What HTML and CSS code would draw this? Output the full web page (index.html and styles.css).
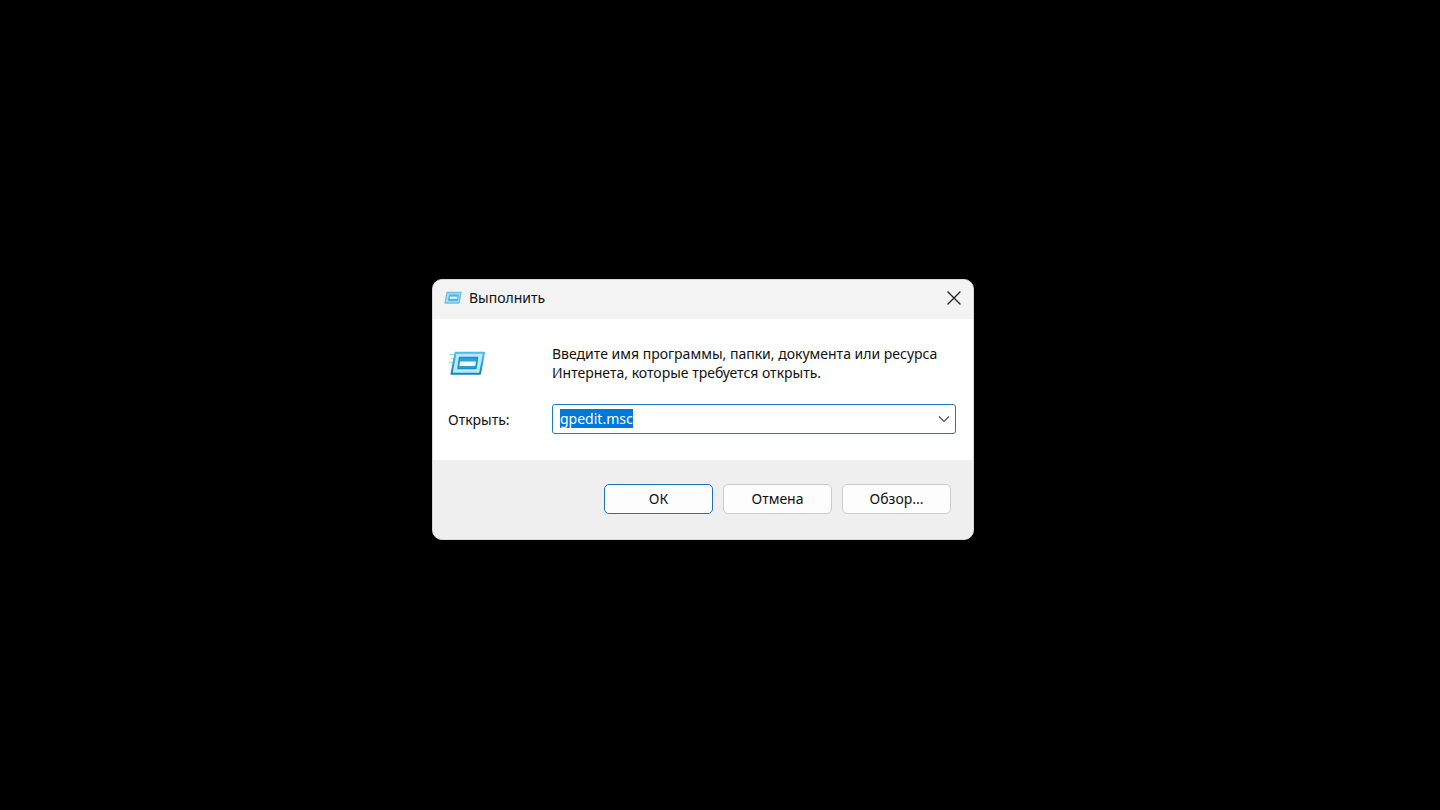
FILE: index.html
```html
<!DOCTYPE html>
<html lang="ru">
<head>
    <meta charset="UTF-8">
    <title>Выполнить</title>
    <link rel="stylesheet" href="styles.css">
</head>
<body>

    <form class="window" id="runDialog">
        <!-- Title bar -->
        <div class="title-bar">
            <svg class="title-icon" viewBox="0 0 18 14">
                <path d="M3 1.500h14l-2 10.500H1z" fill="#a5dcf5" stroke="#6cc0e8" stroke-width="1.300" stroke-linejoin="round"/>
                <path d="M5.500 4h9l-1 5.500H4.500z" fill="#4fb4e4" stroke="#4fb4e4" stroke-linejoin="round"/>
                <path d="M6 5.700h7.500l-.4 2H5.600z" fill="#f4fbff"/>
            </svg>
            <h1>Выполнить</h1>
            <button type="button" class="close-button" aria-label="Закрыть">
                <svg viewBox="0 0 14 14" width="14" height="14">
                    <path d="M1 1l12 12M13 1L1 13" stroke="#222" stroke-width="1.4" stroke-linecap="round"/>
                </svg>
            </button>
        </div>

        <!-- Message and command box -->
        <div class="content">
            <svg class="run-icon" viewBox="0 0 38 28">
                <defs>
                    <linearGradient id="frame" x1="0" y1="0" x2="0" y2="1">
                        <stop offset="0" stop-color="#4cbde9"/>
                        <stop offset="1" stop-color="#1385bd"/>
                    </linearGradient>
                </defs>
                <path d="M1 5.500h6M3 9.500h4M1 13.500h4" stroke="#a9dff5" stroke-width="1.500"/>
                <path d="M7.500 3.800h28.500L32 24.800H3.500z" fill="#b9e9fb" stroke="url(#frame)" stroke-width="2" stroke-linejoin="round"/>
                <path d="M11.500 8.500h18l-1.500 11H10z" fill="#2ba3d8" stroke="#1b91c9" stroke-width="1.500" stroke-linejoin="round"/>
                <path d="M12 12.500h16l-.8 4.500H11.400z" fill="#f4fcff"/>
            </svg>
            <p>Введите имя программы, папки, документа или ресурса Интернета, которые требуется открыть.</p>
            <label for="command">Открыть:</label>
            <div class="combo-box">
                <input type="text" id="command" value="gpedit.msc" autocomplete="off" spellcheck="false">
                <button type="button" aria-label="Показать список">
                    <svg viewBox="0 0 12 8" width="12" height="8">
                        <path d="M1 1.500l5 5 5-5" fill="none" stroke="#555" stroke-width="1.200"/>
                    </svg>
                </button>
            </div>
        </div>

        <!-- Buttons -->
        <div class="button-container">
            <button type="submit" class="default">ОК</button>
            <button type="button">Отмена</button>
            <button type="button">Обзор...</button>
        </div>
    </form>

    <script>
        const command = document.getElementById('command');
        command.focus();
        command.select();

        document.getElementById('runDialog').addEventListener('submit', function(event) {
            event.preventDefault();
        });
    </script>
</body>
</html>
```
FILE: styles.css
```css
* {
    box-sizing: border-box;
}
body {
    margin: 0;
    background-color: #000;
    color: #111;
    font-family: "Noto Sans", sans-serif;
    font-size: 14px;
    line-height: 19px;
}
button, input {
    font: inherit;
    color: inherit;
}
.window {
    position: absolute;
    left: 30%;
    top: 279px;
    width: 542px;
    border: 1px solid #d8d8d8;
    border-radius: 10px;
    background-color: #fff;
    overflow: hidden;
}
.title-bar {
    display: flex;
    align-items: center;
    gap: 7px;
    height: 39px;
    padding: 0 12px 4px 11px;
    background-color: #f3f3f3;
}
.title-bar h1 {
    flex: 1;
    margin: 0;
    font-size: 14px;
    font-weight: normal;
}
.title-icon {
    width: 18px;
    height: 14px;
}
.close-button {
    display: flex;
    padding: 0;
    border: none;
    background: none;
}
.content {
    display: grid;
    grid-template-columns: 104px 1fr;
    align-items: center;
    row-gap: 22px;
    padding: 25px 17px 26px 15px;
}
.content p {
    margin: 0;
}
.run-icon {
    width: 38px;
    height: 28px;
}
.combo-box {
    display: flex;
    align-items: center;
    height: 30px;
    padding: 0 5px 2px 7px;
    border: 1px solid #1f7ac2;
    border-radius: 3px;
    background-color: #fff;
}
.combo-box input {
    flex: 1;
    min-width: 0;
    padding: 0;
    border: none;
    outline: none;
    background: none;
}
.combo-box input::selection {
    background-color: #0078d7;
    color: #fff;
}
.combo-box button {
    display: flex;
    padding: 2px 0 0;
    border: none;
    background: none;
}
.button-container {
    display: flex;
    justify-content: flex-end;
    gap: 10px;
    padding: 24px 22px 25px;
    background-color: #efefef;
}
.button-container button {
    width: 109px;
    height: 30px;
    padding: 0 0 2px;
    border: 1px solid #ccc;
    border-radius: 5px;
    background-color: #fdfdfd;
}
.button-container .default {
    border-color: #1f6fb5;
}
```
